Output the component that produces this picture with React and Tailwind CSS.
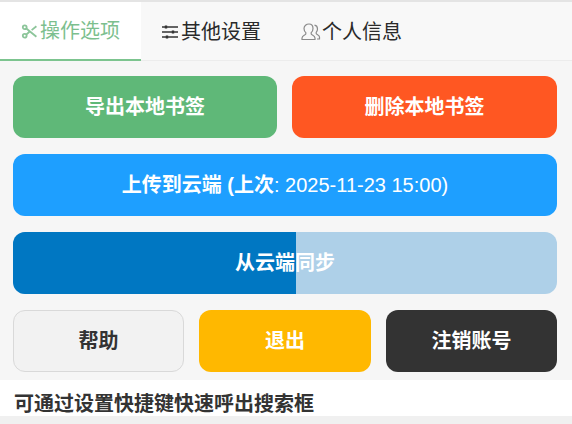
import React from 'react';

const ScissorsIcon = () => (
  <svg viewBox="0 0 16 16" className="w-[17px] h-[17px] shrink-0" fill="none" stroke="#8cc59a" strokeWidth="1.700">
    <circle cx="3.500" cy="4" r="1.800" />
    <circle cx="3.500" cy="12" r="1.800" />
    <path d="M5 5.200 14.500 13M5 10.800 8 8.300M10 6.700 14.500 3" />
  </svg>
);

const SlidersIcon = () => (
  <svg viewBox="0 0 18 18" className="w-[18px] h-[18px] shrink-0" fill="none" stroke="#333" strokeWidth="1.300">
    <path d="M1 4h16M1 9h16M1 14h16" />
    <path d="M5 2.500v3M12 7.500v3M6 12.500v3" strokeWidth="2.400" />
  </svg>
);

const UsersIcon = () => (
  <svg viewBox="0 0 22 22" className="w-[22px] h-[22px] shrink-0" fill="none" stroke="#8a8a8a" strokeWidth="1.200">
    <path d="M9 3c2.600 0 4 1.900 4 4.400 0 1.800-.8 3.200-1.800 4.200v1.300c0 1 3.800 1.700 3.800 4.100v1.500H2v-1.500c0-2.400 3.800-3.100 3.800-4.100v-1.300C4.800 10.600 4 9.200 4 7.400 4 4.900 6.400 3 9 3z" />
    <path d="M14.500 4.200c2 .3 3 2 3 3.800 0 1.500-.6 2.600-1.300 3.400v1.200c0 .8 3.300 1.300 3.300 3.400V18H17" />
  </svg>
);

const Btn = ({ className, children }) => (
  <button className={`h-[62px] rounded-xl flex-none font-bold text-white text-xl flex items-center justify-center ${className}`}>
    {children}
  </button>
);

export default function App() {
  return (
    <div className="w-[572px] h-[424px] overflow-hidden flex flex-col bg-[#f0f0f0] font-['Liberation_Sans','Noto_Sans_CJK_SC',sans-serif]">
      <div className="h-[2px] shrink-0 bg-[#e4e4e4]" />

      {/* Tabs */}
      <div className="h-[59px] shrink-0 flex bg-[#f8f8f8] border-b border-[#ececec] text-xl">
        <div className="w-[141px] -mb-px flex items-center justify-center gap-[2px] pt-px bg-white text-[#7cbf8e] border-b-2 border-[#7cc48f]">
          <ScissorsIcon />
          操作选项
        </div>
        <div className="ml-5 pt-px flex items-center gap-[2px] text-[#2a2a2a]">
          <SlidersIcon />
          其他设置
        </div>
        <div className="ml-[39px] pt-px flex items-center text-[#2a2a2a]">
          <UsersIcon />
          个人信息
        </div>
      </div>

      {/* Actions */}
      <div className="h-[319px] shrink-0 bg-[#f6f6f6] pl-[13px] pr-[15px] pt-[15px] flex flex-col gap-4">
        <div className="flex gap-[15px]">
          <Btn className="w-[264px] bg-[#5fb878]">导出本地书签</Btn>
          <Btn className="w-[265px] bg-[#ff5722]">删除本地书签</Btn>
        </div>
        <Btn className="w-full bg-[#1e9fff]">
          <span>上传到云端 (上次<span className="font-normal">: 2025-11-23 15:00)</span></span>
        </Btn>
        <div className="relative h-[62px] rounded-xl overflow-hidden bg-[#aed0e8] flex items-center justify-center font-bold text-white text-xl">
          <div className="absolute inset-y-0 left-0 w-[283px] bg-[#0077c2]" />
          <span className="relative">从云端同步</span>
        </div>
        <div className="flex gap-[15px]">
          <Btn className="w-[171px] bg-[#f2f2f2] border-[1.5px] border-[#d9d9d9] !text-[#333]">帮助</Btn>
          <Btn className="w-[172px] bg-[#ffb800]">退出</Btn>
          <Btn className="w-[171px] bg-[#333333]">注销账号</Btn>
        </div>
      </div>

      {/* Hint */}
      <div className="h-[36px] shrink-0 bg-white px-[14px] pt-3 flex items-center text-xl font-bold text-[#333]">
        可通过设置快捷键快速呼出搜索框
      </div>
    </div>
  );
}
